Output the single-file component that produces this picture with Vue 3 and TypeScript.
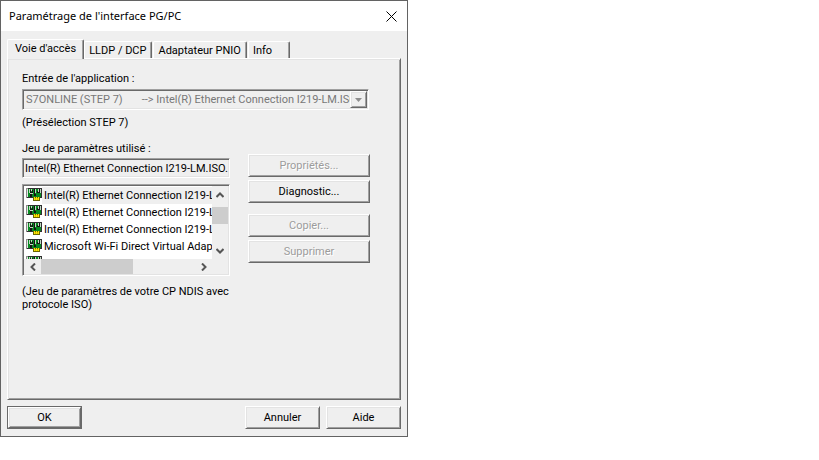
<script setup lang="ts">
import { ref } from 'vue'

const tabs: string[] = ["Voie d'accès", 'LLDP / DCP', 'Adaptateur PNIO', 'Info']
const activeTab = ref(0)

const accessPoint = 'S7ONLINE (STEP 7)\u00a0\u00a0\u00a0\u00a0\u00a0\u00a0\u00a0--> Intel(R) Ethernet Connection I219-LM.ISO.1'
const usedSet = ref('Intel(R) Ethernet Connection I219-LM.ISO.1')

const interfaces: string[] = [
  'Intel(R) Ethernet Connection I219-LM.ISO.1',
  'Intel(R) Ethernet Connection I219-LM.RFC1006.1',
  'Intel(R) Ethernet Connection I219-LM.TCPIP.1',
  'Microsoft Wi-Fi Direct Virtual Adapter.ISO.1',
  '',
]
const selected = ref(0)
</script>

<template>
  <main class="dialog" role="dialog" aria-labelledby="dialog-title">
    <header class="titlebar">
      <h1 id="dialog-title">Paramétrage de l'interface PG/PC</h1>
      <button class="close" type="button" aria-label="Fermer">
        <svg viewBox="0 0 11 11" width="11" height="11"><path d="M.5 .5l10 10M10.500 .5l-10 10" stroke="#000" fill="none" /></svg>
      </button>
    </header>

    <div class="tabs" role="tablist">
      <button
        v-for="(tab, i) in tabs"
        :key="tab"
        type="button"
        role="tab"
        class="tab"
        :class="{ active: i === activeTab, short: tab === 'Info' }"
        :aria-selected="i === activeTab"
        @click="activeTab = i"
      >{{ tab }}</button>
    </div>

    <section class="panel raised" role="tabpanel">
      <label class="label" for="access">Entrée de l'application :</label>
      <div class="combo sunken">
        <select id="access" disabled><option>{{ accessPoint }}</option></select>
        <span class="drop raised" aria-hidden="true">
          <svg viewBox="0 0 7 4" width="7" height="4"><path d="M0 0h7L3.500 4z" fill="#8e8e8e" /></svg>
        </span>
      </div>
      <p class="preset">(Présélection STEP 7)</p>

      <div class="columns">
        <div class="left">
          <label class="label" for="used">Jeu de paramètres utilisé :</label>
          <input id="used" v-model="usedSet" class="used sunken" type="text" readonly />
          <div class="listbox sunken">
            <ul role="listbox" aria-label="Jeux de paramètres">
              <li
                v-for="(name, i) in interfaces"
                :key="i"
                role="option"
                :aria-selected="i === selected"
                :class="{ selected: i === selected }"
                @click="selected = i"
              >
                <svg class="card" viewBox="0 0 16 13" width="16" height="13" shape-rendering="crispEdges" aria-hidden="true">
                  <path d="M0 0h16v10H0z" fill="#303030" />
                  <path d="M0 0h2v1h-1v9h-1z" fill="#8c8c8c" />
                  <path d="M1 1h1v8H1z" fill="#e4e4e4" />
                  <path d="M2 1h13v8H2z" fill="#078a20" />
                  <path d="M4 2h1v2h1V2h1v3H4zM4 6h2v3H4zM8 1h1v5h1v2H8zM12 1h2v4h-3V3h1z" fill="#151515" />
                  <path d="M3 1h1v4H3zM5 1h1v2H5zM4 5h3v1H4zM9 1h1v4H9zM12 1h1v3h-1zM14 1h1v4h-1z" fill="#c4d8c4" />
                  <path d="M7 9h7v4H7z" fill="#6b6400" />
                  <path d="M8 9h1v3H8zM10 9h1v3h-1zM12 9h1v3h-1z" fill="#ffe800" />
                  <path d="M9 10h1v2H9zM11 10h1v2h-1z" fill="#d6bd00" />
                </svg>
                <span>{{ name }}</span>
              </li>
            </ul>
            <div class="vbar">
              <button type="button" aria-label="Défiler vers le haut">
                <svg viewBox="0 0 8 6" width="8" height="6"><path d="M.5 5L4 1.500 7.500 5" /></svg>
              </button>
              <i class="thumb"></i>
              <button class="end" type="button" aria-label="Défiler vers le bas">
                <svg viewBox="0 0 8 6" width="8" height="6"><path d="M.5 1L4 4.500 7.500 1" /></svg>
              </button>
            </div>
            <div class="hbar">
              <button type="button" aria-label="Défiler vers la gauche">
                <svg viewBox="0 0 6 8" width="6" height="8"><path d="M5 .5L1.500 4 5 7.500" /></svg>
              </button>
              <i class="thumb"></i>
              <button class="end" type="button" aria-label="Défiler vers la droite">
                <svg viewBox="0 0 6 8" width="6" height="8"><path d="M1 .5L4.500 4 1 7.500" /></svg>
              </button>
            </div>
          </div>
        </div>

        <div class="actions">
          <button class="btn raised" type="button" disabled>Propriétés...</button>
          <button class="btn raised" type="button">Diagnostic...</button>
          <button class="btn raised apart" type="button" disabled>Copier...</button>
          <button class="btn raised" type="button" disabled>Supprimer</button>
        </div>
      </div>

      <p class="note">(Jeu de paramètres de votre CP NDIS avec protocole ISO)</p>
    </section>

    <footer class="footer">
      <span class="default"><button class="btn raised" type="button">OK</button></span>
      <span class="spacer"></span>
      <button class="btn raised" type="button">Annuler</button>
      <button class="btn raised" type="button">Aide</button>
    </footer>
  </main>
</template>

<style>
body {
  margin: 0;
  background: #fff;
}
</style>

<style scoped>
* {
  box-sizing: border-box;
}
.dialog {
  width: 100%;
  max-width: 408px;
  border: 1px solid #636363;
  background: #efefef;
  color: #000;
  font: 11px/13px Roboto, 'Liberation Sans', sans-serif;
}
button,
input,
select {
  margin: 0;
  padding: 0;
  border: 0;
  border-radius: 0;
  background: none;
  color: inherit;
  font: inherit;
}
p {
  margin: 0;
}
svg {
  display: block;
  flex: none;
}
.raised {
  border: 1px solid;
  border-color: #fff #696969 #696969 #fff;
  box-shadow: inset 1px 1px 0 #e3e3e3, inset -1px -1px 0 #a0a0a0;
}
.sunken {
  padding: 1px;
  border: 1px solid;
  border-color: #a0a0a0 #fff #fff #a0a0a0;
  box-shadow: inset 1px 1px 0 #696969, inset -1px -1px 0 #e3e3e3;
}
.titlebar {
  display: flex;
  align-items: center;
  justify-content: space-between;
  height: 30px;
  padding: 0 10px 0 8px;
  background: #fff;
}
.titlebar h1 {
  margin: 0;
  font: 11px/16px 'Noto Sans', 'Open Sans', sans-serif;
}
.tabs {
  display: flex;
  align-items: flex-end;
  gap: 1px;
  height: 27px;
  padding: 0 6px;
}
.tab {
  height: 17px;
  padding: 0 5px 0 4px;
  border-top: 1px solid #fff;
  border-left: 1px solid #fff;
  border-right: 1px solid #696969;
  border-radius: 2px 2px 0 0;
  box-shadow: inset -1px 0 0 #a0a0a0;
  white-space: nowrap;
}
.tab.active {
  height: 20px;
  margin: 0 -1px -1px 0;
  padding: 0 7px 2px;
  background: #efefef;
  z-index: 1;
}
.tab.short {
  padding-right: 17px;
}
.panel {
  min-height: 342px;
  margin: 0 6px;
  padding: 13px 30px 0 14px;
}
.label {
  display: block;
}
.combo {
  position: relative;
  height: 21px;
  margin: 4px 1px 0 0;
}
.combo select {
  display: block;
  width: 100%;
  height: 17px;
  padding: 0 17px 0 2px;
  appearance: none;
  color: #787878;
  opacity: 1;
  overflow: hidden;
  white-space: pre;
}
.drop {
  position: absolute;
  top: 1px;
  right: 1px;
  display: grid;
  place-items: center;
  width: 17px;
  height: 17px;
  background: #efefef;
}
.preset {
  margin-top: 6px;
}
.columns {
  display: grid;
  grid-template-columns: minmax(0, 208fr) minmax(0, 122fr);
  gap: 18px;
  margin-top: 13px;
}
.used {
  display: block;
  width: 100%;
  height: 20px;
  margin-top: 3px;
  padding: 0 1px 0 2px;
}
.listbox {
  display: grid;
  grid-template-columns: minmax(0, 1fr) 16px;
  grid-template-rows: 73px 15px;
  margin-top: 6px;
}
.listbox ul {
  margin: 0;
  padding: 1px 0 0 2px;
  overflow: hidden;
  background: #fff;
  list-style: none;
}
.listbox li {
  display: flex;
  align-items: flex-start;
  height: 17px;
  white-space: nowrap;
}
.card {
  margin-top: 1px;
}
.listbox li span {
  flex: 1;
  padding-left: 2px;
  line-height: 17px;
}
.listbox li.selected span {
  background: #efefef;
}
.vbar,
.hbar {
  display: flex;
}
.vbar {
  flex-direction: column;
}
.hbar {
  grid-column: 1 / -1;
  padding-right: 16px;
}
.vbar button,
.hbar button {
  display: grid;
  place-items: center;
  width: 16px;
  height: 17px;
}
.hbar button {
  width: 17px;
  height: 15px;
}
.vbar svg,
.hbar svg {
  fill: none;
  stroke: #555;
  stroke-width: 2;
}
.vbar .thumb {
  height: 17px;
  margin-top: 4px;
  background: #cdcdcd;
}
.hbar .thumb {
  width: 92px;
  background: #cdcdcd;
}
.vbar .end {
  margin-top: auto;
}
.hbar .end {
  margin-left: auto;
}
.actions {
  display: flex;
  flex-direction: column;
  gap: 3px;
  padding-top: 12px;
}
.btn {
  height: 23px;
  background: #efefef;
  text-align: center;
}
.btn:disabled {
  color: #9c9c9c;
  text-shadow: 1px 1px 0 #fff;
}
.btn.apart {
  margin-top: 8px;
}
.note {
  max-width: 220px;
  margin-top: 9px;
}
.footer {
  display: flex;
  gap: 6px;
  padding: 6px 6px 7px;
}
.footer .btn {
  width: 75px;
}
.default {
  display: flex;
  width: 75px;
  border: 1px solid #696969;
}
.default .btn {
  flex: 1;
  height: 21px;
}
.spacer {
  flex: 1;
}
</style>
